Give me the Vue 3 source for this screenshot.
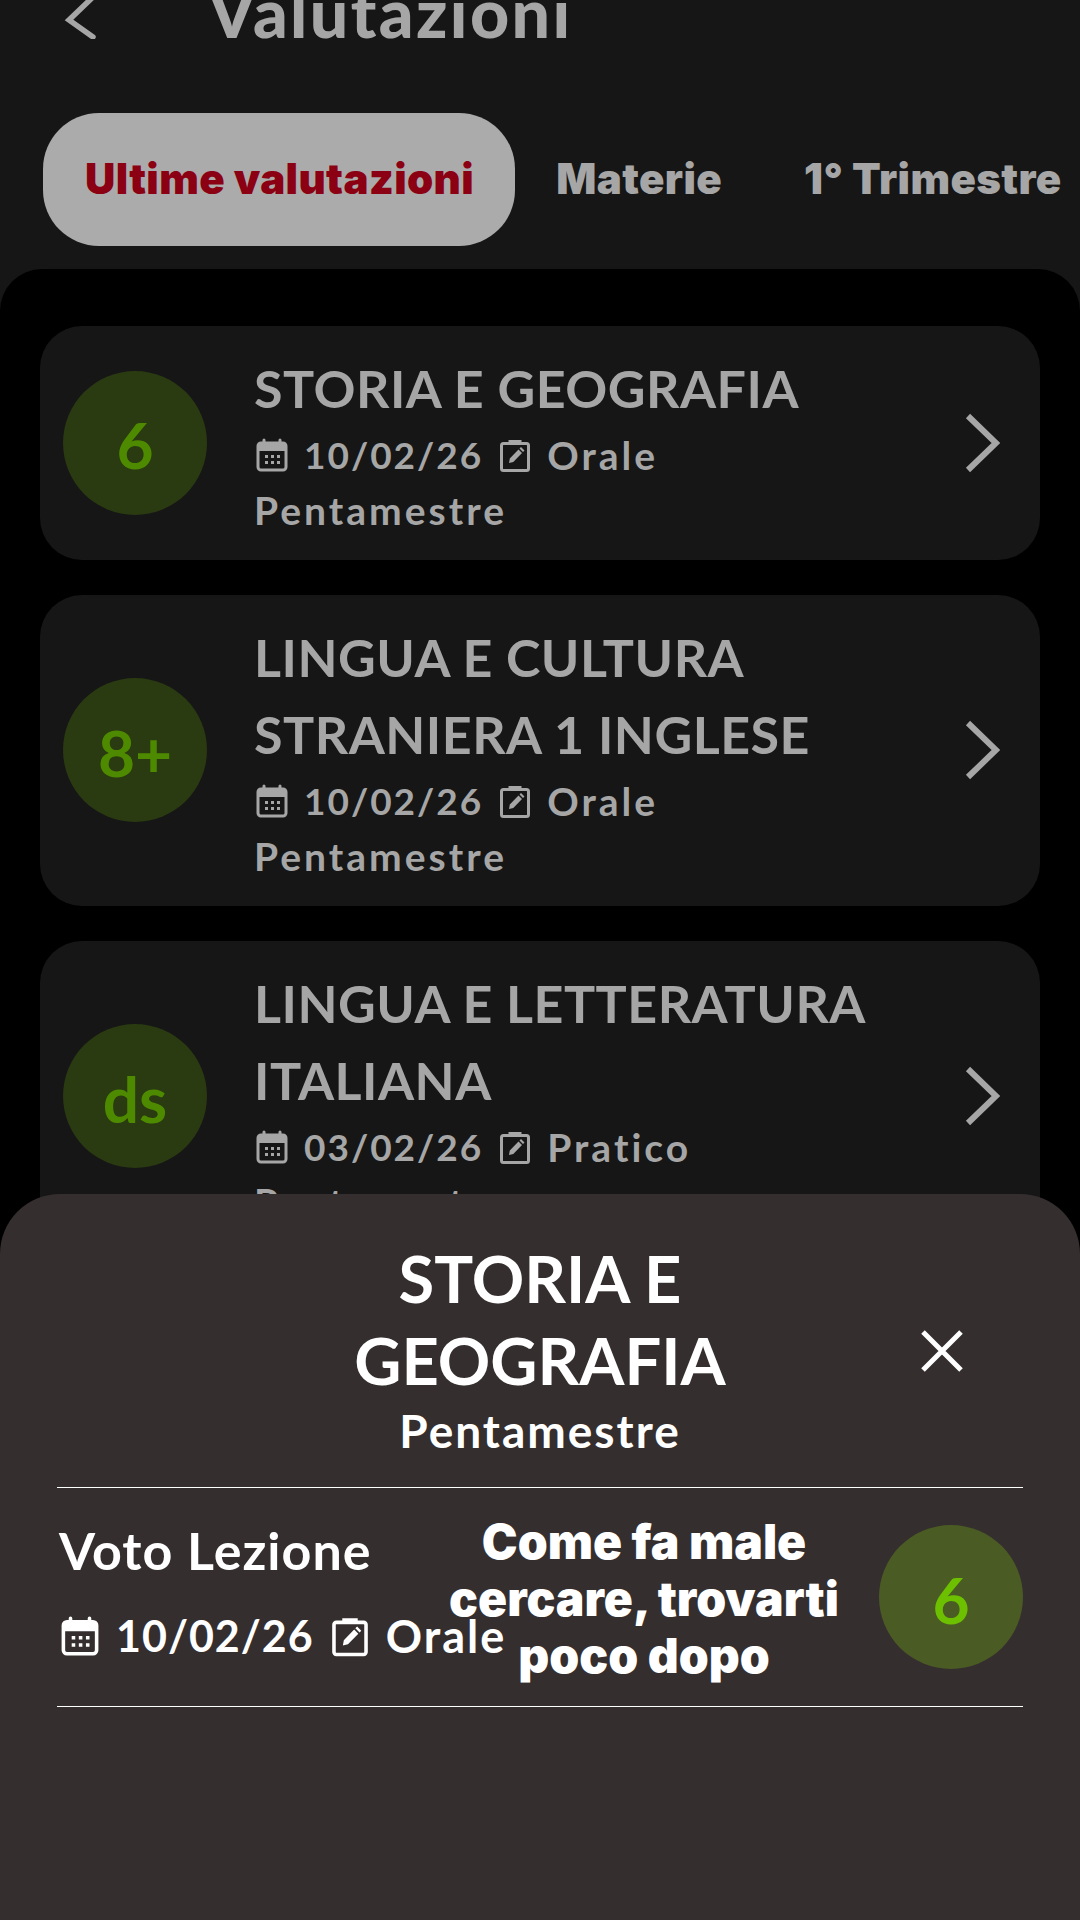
<template>
  <div class="screen">
    <svg class="defs" width="0" height="0" aria-hidden="true">
      <symbol id="ico-cal" viewBox="0 0 32 34">
        <path d="M8 2v5M24 2v5" fill="none" stroke="currentColor" stroke-width="3" stroke-linecap="round" />
        <rect x="2" y="5" width="28" height="27" rx="3" fill="none" stroke="currentColor" stroke-width="3" />
        <rect x="2" y="5" width="28" height="8" fill="currentColor" />
        <path
          d="M9 17h3v3H9zM15 17h3v3h-3zM21 17h3v3h-3zM9 23h3v3H9zM15 23h3v3h-3zM21 23h3v3h-3z"
          fill="currentColor"
        />
      </symbol>
      <symbol id="ico-edit" viewBox="0 0 32 34">
        <rect x="2.5" y="5.5" width="27" height="27" rx="2" fill="none" stroke="currentColor" stroke-width="3" />
        <path d="M11 6.5V3.5h10v3" fill="none" stroke="currentColor" stroke-width="3" />
        <path d="M10 25l.8-4.500 8.700-9 3.500 3.500-8.700 9zM20.500 10.500l1.500-1.500 3.500 3.500-1.500 1.500z" fill="currentColor" />
      </symbol>
    </svg>

    <header class="top">
      <svg class="back" viewBox="0 0 32 44" width="32" height="44">
        <path d="M29 2 5 25l24 17" fill="none" stroke="currentColor" stroke-width="5.500" stroke-linecap="round" />
      </svg>
      <h1 class="top__title">Valutazioni</h1>
    </header>

    <nav class="tabs">
      <span v-for="(t, i) in tabs" :key="t" class="tab" :class="{ 'tab--on': i === 0 }">{{ t }}</span>
    </nav>

    <section class="panel">
      <article v-for="g in grades" :key="g.title" class="card">
        <div class="bubble">{{ g.mark }}</div>
        <div class="card__body">
          <div class="card__title">{{ g.title }}</div>
          <div class="meta">
            <svg class="ico"><use href="#ico-cal" /></svg>
            <span>{{ g.date }}</span>
            <svg class="ico"><use href="#ico-edit" /></svg>
            <span class="word">{{ g.type }}</span>
          </div>
          <div class="meta word">Pentamestre</div>
        </div>
        <svg class="chev" viewBox="0 0 36 60" width="36" height="60">
          <path d="M4 3 32 30 4 57" fill="none" stroke="currentColor" stroke-width="6" />
        </svg>
      </article>
    </section>

    <section class="sheet">
      <div class="sheet__head">
        <h2 class="sheet__title">STORIA E GEOGRAFIA</h2>
        <div class="sheet__sub">Pentamestre</div>
        <svg class="close" viewBox="0 0 42 42" width="42" height="42">
          <path d="M2 2l38 38M40 2 2 40" fill="none" stroke="#fff" stroke-width="5" />
        </svg>
      </div>
      <div class="row">
        <div class="row__left">
          <div class="row__name">Voto Lezione</div>
          <div class="row__meta">
            <svg class="ico ico--big"><use href="#ico-cal" /></svg>
            <span>10/02/26</span>
            <svg class="ico ico--big"><use href="#ico-edit" /></svg>
            <span class="row__type">Orale</span>
          </div>
        </div>
        <div class="song">Come fa male cercare, trovarti poco dopo</div>
        <div class="bubble bubble--light">6</div>
      </div>
    </section>
  </div>
</template>

<script setup>
const tabs = ["Ultime valutazioni", "Materie", "1° Trimestre"];

const grades = [
  { mark: "6", title: "STORIA E GEOGRAFIA", date: "10/02/26", type: "Orale" },
  { mark: "8+", title: "LINGUA E CULTURA STRANIERA 1 INGLESE", date: "10/02/26", type: "Orale" },
  { mark: "ds", title: "LINGUA E LETTERATURA ITALIANA", date: "03/02/26", type: "Pratico" },
];
</script>

<style>
html,
body {
  background: #161616;
}
</style>

<style scoped>
.screen {
  position: relative;
  width: 1080px;
  height: 1920px;
  overflow: hidden;
  background: #161616;
  color: #a6a6a6;
  font-family: Lato, "Open Sans", sans-serif;
}

.defs {
  position: absolute;
}

.top {
  display: flex;
  align-items: center;
  height: 80px;
  margin-top: -28px;
  padding-left: 64px;
}

.back {
  flex: none;
  margin-top: 10px;
}

.top__title {
  margin: 0 0 0 112px;
  font-size: 68px;
  font-weight: 900;
  letter-spacing: 2.400px;
  line-height: 80px;
}

.tabs {
  display: flex;
  margin-top: 61px;
  padding-left: 43px;
  white-space: nowrap;
}

.tab {
  display: flex;
  align-items: center;
  height: 133px;
  padding: 0 41px 2px;
  box-sizing: border-box;
  border-radius: 56px;
  font-family: Inter, Roboto, sans-serif;
  font-size: 42px;
  font-weight: 900;
  letter-spacing: 0.400px;
}

.tab--on {
  padding-left: 42px;
  background: #ababab;
  color: #8b0012;
}

.panel {
  display: flex;
  flex-direction: column;
  gap: 35px;
  margin-top: 23px;
  padding: 57px 40px 0;
  height: 1700px;
  border-radius: 42px 42px 0 0;
  background: #000;
}

.card {
  display: flex;
  align-items: center;
  flex: none;
  padding: 23px 40px 24px 23px;
  border-radius: 42px;
  background: #161616;
}

.bubble {
  display: flex;
  align-items: center;
  justify-content: center;
  flex: none;
  width: 144px;
  height: 144px;
  padding-top: 4px;
  box-sizing: border-box;
  border-radius: 50%;
  background: #2a3a11;
  color: #4e8a00;
  font-size: 64px;
  font-weight: 700;
}

.card__body {
  flex: 1;
  margin: 1px 0 -1px 47px;
}

.card__title {
  font-size: 52px;
  font-weight: 700;
  letter-spacing: 0.500px;
  line-height: 77px;
  max-width: 640px;
}

.meta {
  display: flex;
  align-items: center;
  gap: 14px;
  height: 55px;
  font-size: 37px;
  font-weight: 700;
  letter-spacing: 2px;
}

.word {
  font-size: 39px;
  letter-spacing: 3px;
}

.ico {
  flex: none;
  width: 32px;
  height: 34px;
  margin: 0 2px;
}

.ico--big {
  width: 38px;
  height: 42px;
}

.chev {
  flex: none;
}

.sheet {
  position: absolute;
  left: 0;
  right: 0;
  bottom: 0;
  height: 726px;
  padding: 43px 57px 0;
  box-sizing: border-box;
  border-radius: 60px 60px 0 0;
  background: #352e2e;
  color: #fff;
}

.sheet__head {
  position: relative;
  height: 250px;
  border-bottom: 1px solid #fff;
  text-align: center;
}

.sheet__title {
  width: 480px;
  margin: 0 auto;
  font-size: 65px;
  font-weight: 700;
  line-height: 82px;
}

.sheet__sub {
  font-size: 46px;
  font-weight: 700;
  letter-spacing: 2px;
  line-height: 60px;
}

.close {
  position: absolute;
  top: 93px;
  right: 60px;
}

.row {
  display: flex;
  align-items: center;
  height: 218px;
  padding-left: 2px;
  border-bottom: 1px solid #fff;
}

.row__left {
  flex: none;
  width: 385px;
  margin-top: -8px;
  white-space: nowrap;
}

.row__name {
  font-size: 52px;
  font-weight: 700;
  letter-spacing: 1px;
  line-height: 60px;
  margin-bottom: 26px;
}

.row__meta {
  display: flex;
  align-items: center;
  gap: 15px;
  font-size: 43px;
  font-weight: 700;
  letter-spacing: 1px;
  line-height: 60px;
}

.row__type {
  font-size: 45px;
  letter-spacing: 2px;
}

.song {
  flex: none;
  width: 400px;
  margin-top: 3px;
  font-family: Inter, Roboto, sans-serif;
  font-size: 48px;
  font-weight: 900;
  line-height: 57px;
  text-align: center;
}

.bubble--light {
  margin-left: auto;
  background: #4a5b24;
  color: #6cc000;
}
</style>
